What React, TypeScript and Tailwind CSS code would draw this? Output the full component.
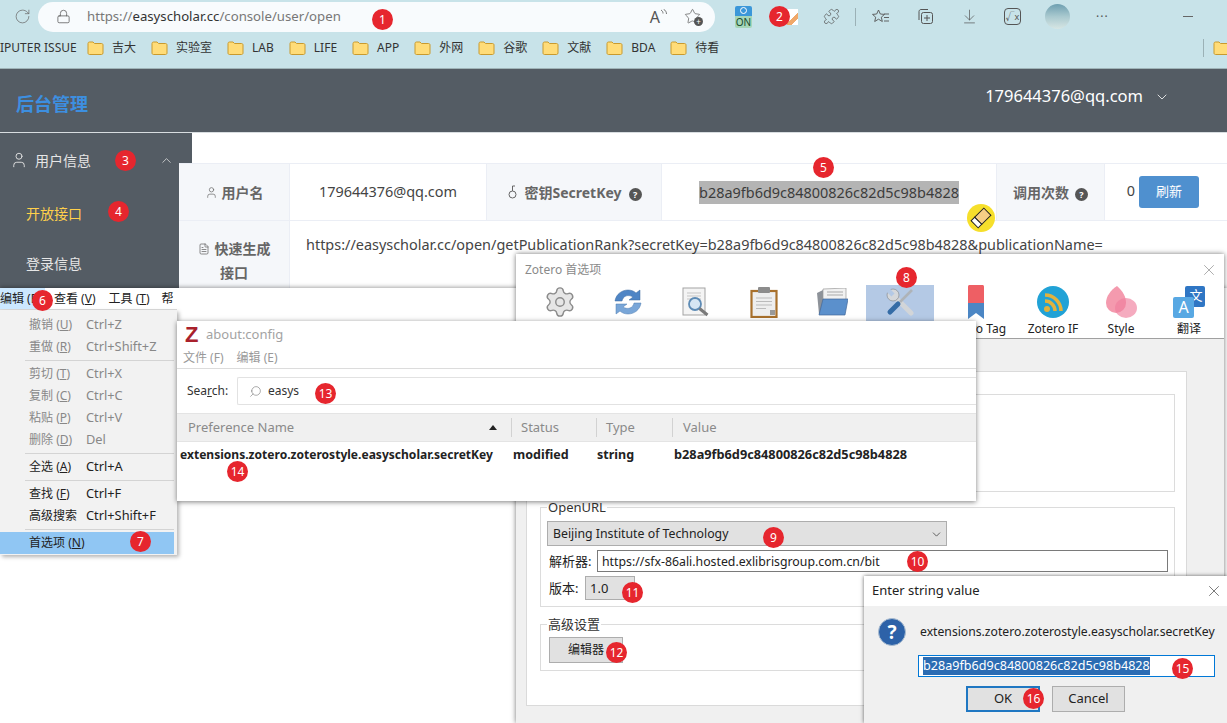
// App.tsx
import type { ReactNode } from 'react';
import { ArrowDownToLine, ChevronDown, ChevronUp, FileText, Lock, Puzzle, RotateCw, Search, Settings, Star, User, X } from 'lucide-react';

const SECRET_KEY = 'b28a9fb6d9c84800826c82d5c98b4828';
const OPEN_URL = `https://easyscholar.cc/open/getPublicationRank?secretKey=${SECRET_KEY}&publicationName=`;

const bookmarks = ['吉大', '实验室', 'LAB', 'LIFE', 'APP', '外网', '谷歌', '文献', 'BDA', '待看'];

function Marker({ n, className }: { n: number; className: string }) {
  return (
    <span className={`absolute z-40 flex h-[21px] w-[21px] items-center justify-center rounded-full bg-[#e6262e] text-[12px] leading-none text-white ${className}`}>
      {n}
    </span>
  );
}

function Folder() {
  return (
    <svg width="17" height="16" viewBox="0 0 17 16" className="shrink-0">
      <path d="M1 3.5C1 2.7 1.6 2 2.5 2H6l1.5 1.5h7c.9 0 1.5.6 1.500 1.500v8c0 .9-.6 1.500-1.500 1.500h-12C1.600 14.500 1 13.900 1 13z" fill="#ffdc78" stroke="#c99a2e" />
    </svg>
  );
}

function BrowserChrome() {
  return (
    <div className="h-[68px] shrink-0 bg-[#c8e3e9] text-[#444]">
      <div className="flex h-[33px] items-center">
        <div className="flex w-[38px] justify-center pl-[6px]">
          <RotateCw size={17} strokeWidth={1} className="text-[#666]" />
        </div>
        <div className="flex h-[30px] w-[677px] items-center rounded-full bg-[#f8fbfd]">
          <Lock size={15} strokeWidth={1.2} className="ml-[18px] text-[#555]" />
          <span className="ml-[16px] text-[13.2px] text-[#777]">
            https://<span className="text-[#333]">easyscholar.cc</span>/console/user/open
          </span>
          <span className="ml-auto mr-[14px] flex items-center gap-[17px] text-[#555]">
            <span className="flex items-start text-[16px] leading-none">
              A
              <svg width="7" height="9" viewBox="0 0 7 9" fill="none" stroke="currentColor" strokeWidth="0.800">
                <path d="M1 1c1.500 1 2 2 2 3.500M3.500 0c2 1.500 3 3 3 5" />
              </svg>
            </span>
            <span className="relative">
              <Star size={17} strokeWidth={1} />
              <span className="absolute -bottom-[1px] -right-[2px] flex h-[9px] w-[9px] items-center justify-center rounded-full bg-[#555] text-[8px] leading-none text-white">+</span>
            </span>
          </span>
        </div>
        <div className="ml-[20px] flex h-[22px] w-[17px] flex-col items-center overflow-hidden rounded-[2px]">
          <div className="flex h-[10px] w-full items-center justify-center bg-[#3b97d9]">
            <span className="h-[7px] w-[7px] rounded-full border border-white" />
          </div>
          <div className="flex h-[12px] w-full items-center justify-center bg-[#a5d6b8] text-[10px] leading-none text-[#174a2c]">ON</div>
        </div>
        <div className="ml-[35px] h-[16px] w-[11px] bg-[linear-gradient(135deg,#fff_55%,#f0a869_55%,#f0a869_75%,#fff_75%)]" />
        <Puzzle size={17} strokeWidth={1} className="ml-[25px] text-[#555]" />
        <span className="ml-[15px] h-[18px] w-px bg-[#9bb1b6]" />
        <div className="ml-[16px] flex items-center text-[#555]">
          <span className="flex w-[18px] justify-center">
            <svg width="18" height="16" viewBox="0 0 18 16" fill="none" stroke="currentColor" strokeWidth="0.900">
              <path d="M6.500 1l1.800 4 4.200.4-3.200 2.800 1 4.300-3.800-2.300-3.800 2.300 1-4.300L.500 5.400l4.200-.4z" />
              <path d="M12 5h5M12 8.500h5M12 12h5" />
            </svg>
          </span>
          <span className="ml-[26px] flex w-[18px] justify-center">
            <svg width="17" height="17" viewBox="0 0 17 17" fill="none" stroke="currentColor">
              <rect x="4.500" y="4.500" width="11" height="11" rx="2" />
              <path d="M2 12V3.500C2 2.500 2.800 1.500 4 1.500h7M10 7v6M7 10h6" />
            </svg>
          </span>
          <span className="ml-[26px] flex w-[18px] justify-center"><ArrowDownToLine size={17} strokeWidth={1} /></span>
          <span className="ml-[26px] flex h-[17px] w-[17px] items-center justify-center rounded-[4px] border border-[#555] text-[9px]">√x</span>
          <span className="ml-[24px] h-[25px] w-[25px] rounded-full bg-gradient-to-b from-[#6e9fb0] via-[#a9c9cf] to-[#d7e6e4]" />
          <span className="ml-[26px] text-[12px] tracking-[1px] leading-none">···</span>
          <span className="ml-[74px] h-px w-[10px] bg-[#666]" />
        </div>
      </div>
      <div className="flex h-[30px] items-center whitespace-nowrap text-[12px]">
        <div className="w-[87px] shrink-0 text-[#333]">IPUTER ISSUE</div>
        <div className="flex shrink-0 gap-[15px]">
          {bookmarks.map(b => (
            <span key={b} className="flex shrink-0 items-center gap-[8px] text-[#333]">
              <Folder />
              {b}
            </span>
          ))}
        </div>
        <span className="ml-[484px] h-[18px] w-px shrink-0 bg-[#9bb1b6]" />
        <span className="ml-[9px] shrink-0"><Folder /></span>
      </div>
    </div>
  );
}

function HelpDot() {
  return (
    <span className="inline-flex h-[13px] w-[13px] items-center justify-center rounded-full bg-[#555] text-[9px] font-bold leading-none text-white">?</span>
  );
}

function LabelCell({ children, className = '' }: { children: ReactNode; className?: string }) {
  return (
    <div className={`flex items-center justify-center gap-[4px] border-r border-b border-[#ebeef5] bg-[#f5f7fa] text-[14px] font-bold text-[#666] ${className}`}>
      {children}
    </div>
  );
}

function InfoTable() {
  return (
    <div className="relative z-10 -ml-[13px] mt-[30px] grid h-[125px] flex-1 grid-cols-[111px_197px_175px_335px_108px_122px] grid-rows-[57px_68px] border-t border-[#ebeef5] bg-white text-[14.45px] text-[#444]">
      <LabelCell>
        <User size={13} strokeWidth={1.3} />
        用户名
      </LabelCell>
      <div className="flex items-center justify-center border-r border-b border-[#ebeef5]">179644376@qq.com</div>
      <LabelCell className="pl-[2px]">
        <svg width="9" height="14" viewBox="0 0 9 14" fill="none" stroke="#666" className="mr-[3px]">
          <circle cx="4.500" cy="9.500" r="3.500" />
          <path d="M4.500 6V1h2.500" />
        </svg>
        密钥SecretKey
        <span className="ml-[3px]"><HelpDot /></span>
      </LabelCell>
      <div className="flex items-center justify-center border-r border-b border-[#ebeef5]">
        <span className="bg-[#b4b4b4] leading-[23px] text-[#3c3c3c]">{SECRET_KEY}</span>
      </div>
      <LabelCell>
        调用次数
        <span className="ml-[2px]"><HelpDot /></span>
      </LabelCell>
      <div className="flex items-center justify-end gap-[4px] border-b border-[#ebeef5] pr-[28px]">
        <span className="-mt-[3px]">0</span>
        <button className="h-[32px] w-[60px] rounded-[3px] bg-[#4f90cf] text-[13px] text-white">刷新</button>
      </div>
      <LabelCell className="pt-[12px]">
        <div className="w-[80px] text-center leading-[24px]">
          <FileText size={12} strokeWidth={1.5} className="mr-[5px] inline align-[-1px]" />
          快速生成
          <br />
          接口
        </div>
      </LabelCell>
      <div className="col-span-5 whitespace-nowrap pl-[16px] pt-[13px] leading-[22px]">{OPEN_URL}</div>
    </div>
  );
}

function Sidebar() {
  return (
    <aside className="w-[192px] shrink-0 bg-[#545c64] text-[14px] text-[#e6e6e6]">
      <div className="flex h-[54px] items-center pl-[10px]">
        <User size={18} strokeWidth={1.2} />
        <span className="ml-[7px]">用户信息</span>
        <ChevronUp size={15} strokeWidth={1.2} className="ml-[68px]" />
      </div>
      <div className="flex h-[52px] items-center pl-[26px] text-[#ffd04b]">开放接口</div>
      <div className="flex h-[48px] items-center pl-[26px]">登录信息</div>
    </aside>
  );
}

type MenuEntry = { label?: string; key?: string; shortcut?: string; disabled?: boolean; active?: boolean };

const menuEntries: MenuEntry[] = [
  { label: '撤销', key: 'U', shortcut: 'Ctrl+Z', disabled: true },
  { label: '重做', key: 'R', shortcut: 'Ctrl+Shift+Z', disabled: true },
  {},
  { label: '剪切', key: 'T', shortcut: 'Ctrl+X', disabled: true },
  { label: '复制', key: 'C', shortcut: 'Ctrl+C', disabled: true },
  { label: '粘贴', key: 'P', shortcut: 'Ctrl+V', disabled: true },
  { label: '删除', key: 'D', shortcut: 'Del', disabled: true },
  {},
  { label: '全选', key: 'A', shortcut: 'Ctrl+A' },
  {},
  { label: '查找', key: 'F', shortcut: 'Ctrl+F' },
  { label: '高级搜索', shortcut: 'Ctrl+Shift+F' },
  {},
  { label: '首选项', key: 'N', active: true },
];

function EditMenu() {
  return (
    <div className="absolute left-0 top-[288px] z-20 w-[177px] text-[12px] text-[#222]">
      <div className="flex h-[22px] items-center border-b border-[#dcdcdc] bg-white">
        <span className="flex h-full w-[45px] items-center bg-[#cce8ff]">编辑 (E)</span>
        <span className="ml-[9px]">查看 (<u>V</u>)</span>
        <span className="ml-[13px]">工具 (<u>T</u>)</span>
        <span className="ml-[12px]">帮</span>
      </div>
      <div className="h-[245px] bg-[#f2f2f2] pb-[1px] pr-[3px] pt-[4px] shadow-[2px_2px_4px_rgba(0,0,0,0.3)]">
        {menuEntries.map((m, i) =>
          m.label ? (
            <div key={i} className={`flex h-[22px] items-center pl-[29px] ${m.disabled ? 'text-[#888]' : ''} ${m.active ? 'bg-[#90c6f3]' : ''}`}>
              <span className="w-[57px] whitespace-nowrap">
                {m.label}
                {m.key && (
                  <>
                    {' ('}
                    <u>{m.key}</u>)
                  </>
                )}
              </span>
              <span className="text-[12.8px]">{m.shortcut}</span>
            </div>
          ) : (
            <div key={i} className="flex h-[5px] items-center pl-[25px]">
              <div className="h-px w-full bg-[#d4d4d4]" />
            </div>
          ),
        )}
      </div>
    </div>
  );
}

function SyncIcon() {
  return (
    <svg width="28" height="28" viewBox="0 0 28 28">
      <path d="M1 13C2 6 8 2 14 2c3 0 6 1 8 3l4-3v10H15l4-3c-5-3-10-1-11 4z" fill="#4f85c5" stroke="#3c689e" strokeWidth="0.500" />
      <path d="M27 15c-1 7-7 11-13 11-3 0-6-1-8-3l-4 3V16h11l-4 3c5 3 10 1 11-4z" fill="#79a6d8" stroke="#4f7cb0" strokeWidth="0.500" />
    </svg>
  );
}

function DocSearchIcon() {
  return (
    <svg width="28" height="30" viewBox="0 0 28 30">
      <rect x="1" y="1" width="22" height="27" fill="#f4f4f4" stroke="#a3a3a3" />
      <path d="M5 6h14M5 9h14M5 12h14" stroke="#c5c5c5" />
      <circle cx="13" cy="17" r="6" fill="#d6e6f3" stroke="#5d8bb5" strokeWidth="1.800" />
      <path d="M17.500 21.500l8 6.500" stroke="#7a7a7a" strokeWidth="3" />
    </svg>
  );
}

function ClipboardIcon() {
  return (
    <svg width="28" height="31" viewBox="0 0 28 31">
      <rect x="1.500" y="4" width="25" height="26" fill="#eee" stroke="#a8702c" strokeWidth="2.200" />
      <rect x="8" y="0" width="12" height="6" rx="1" fill="#8c8c8c" />
      <path d="M6 11h16M6 14.500h16M6 18h16M6 21.500h10" stroke="#bbb" />
      <rect x="20" y="23" width="5" height="5" fill="#999" />
    </svg>
  );
}

function FolderOpenIcon() {
  return (
    <svg width="32" height="28" viewBox="0 0 32 28">
      <path d="M1 5l6-3v24H3z" fill="#8d9299" />
      <path d="M7 1l23-1v14H7z" fill="#f1f1f1" stroke="#9a9a9a" strokeWidth="0.700" />
      <path d="M11 4h16M11 7h16" stroke="#a9a9a9" />
      <path d="M7 11h25l-3 16H3z" fill="#5b90cc" stroke="#43699a" strokeWidth="0.700" />
    </svg>
  );
}

function ToolsIcon() {
  return (
    <svg width="28" height="28" viewBox="0 0 28 28" fill="none">
      <path d="M7 7l18 18" stroke="#d2d5d8" strokeWidth="5" strokeLinecap="round" />
      <circle cx="7" cy="7" r="6" fill="#d5d8db" stroke="#7d8186" strokeWidth="0.600" />
      <path d="M1 1l6 6" stroke="#b4c9e5" strokeWidth="4.500" />
      <path d="M14 14L26 2" stroke="#aeb3b8" strokeWidth="2.600" />
      <path d="M4 24l8-8" stroke="#356ca6" strokeWidth="5" strokeLinecap="round" />
    </svg>
  );
}

function BookmarkIcon() {
  return (
    <svg width="16" height="34" viewBox="0 0 16 34">
      <path d="M0 1.500C0 .700.700 0 1.500 0h13c.800 0 1.500.700 1.500 1.500V18H0z" fill="#ee5f64" />
      <path d="M0 18h16v16l-8-6-8 6z" fill="#4b86c4" />
    </svg>
  );
}

function RssIcon() {
  return (
    <svg width="32" height="32" viewBox="0 0 32 32" fill="none">
      <circle cx="16" cy="16" r="16" fill="#21a2d6" />
      <circle cx="10" cy="23" r="3" fill="#e2b23d" />
      <path d="M8 15a10 10 0 0 1 10 10M8 9a16 16 0 0 1 16 16" stroke="#e2b23d" strokeWidth="3.500" />
    </svg>
  );
}

function PetalIcon() {
  return (
    <svg width="32" height="32" viewBox="0 0 32 32">
      <path d="M12 0c6 5 9 11 9 17a10 10 0 0 1-20 0C1 10 6 4 12 0z" fill="#f49aae" />
      <ellipse cx="21" cy="22" rx="11" ry="10" fill="#f07e9c" fillOpacity="0.650" />
    </svg>
  );
}

function TranslateIcon() {
  return (
    <svg width="32" height="32" viewBox="0 0 32 32">
      <rect x="12" y="0" width="20" height="21" rx="2" fill="#2f76c4" />
      <text x="23" y="14" fontSize="13" fill="#fff" textAnchor="middle">文</text>
      <rect x="0" y="11" width="21" height="21" rx="2" fill="#58a8e3" />
      <text x="10.500" y="27" fontSize="16" fill="#fff" textAnchor="middle">A</text>
    </svg>
  );
}

const prefTabs = [
  { label: '通用', width: 'w-[68px]', icon: <Settings size={34} strokeWidth={1} className="fill-[#e6e6e6] text-[#8c8c8c]" /> },
  { label: '同步', width: 'w-[68px]', icon: <SyncIcon /> },
  { label: '搜索', width: 'w-[68px]', icon: <DocSearchIcon /> },
  { label: '导出', width: 'w-[68px]', icon: <ClipboardIcon /> },
  { label: '引用', width: 'w-[68px]', icon: <FolderOpenIcon /> },
  { label: '高级', width: 'w-[68px]', icon: <ToolsIcon />, active: true },
  { label: 'Zotero Tag', width: 'w-[84px]', icon: <BookmarkIcon /> },
  { label: 'Zotero IF', width: 'w-[70px]', icon: <RssIcon /> },
  { label: 'Style', width: 'w-[66px]', icon: <PetalIcon /> },
  { label: '翻译', width: 'w-[70px]', icon: <TranslateIcon /> },
];

function GroupBox({ title, className, children }: { title?: string; className: string; children?: ReactNode }) {
  return (
    <div className={`relative border border-[#dcdcdc] ${className}`}>
      {title && <span className="absolute -top-[10px] left-[6px] bg-white px-[1px] text-[13px] leading-[18px] text-[#333]">{title}</span>}
      {children}
    </div>
  );
}

function ZoteroPrefs() {
  return (
    <div className="absolute left-[516px] top-[254px] z-20 flex h-[469px] w-[708px] flex-col bg-white shadow-[0_0_5px_rgba(0,0,0,0.55)]">
      <div className="flex h-[31px] shrink-0 items-center justify-between pl-[9px] pr-[6px] text-[12px] text-[#8a8a8a]">
        Zotero 首选项
        <X size={18} strokeWidth={0.8} className="text-[#777]" />
      </div>
      <div className="flex h-[54px] shrink-0 border-b border-[#a0a0a0] pl-[10px]">
        {prefTabs.map(t => (
          <div key={t.label} className={`flex shrink-0 flex-col items-center ${t.width} ${t.active ? 'bg-[#b4c9e5]' : ''}`}>
            <div className="flex h-[34px] items-center justify-center">{t.icon}</div>
            <span className="mt-[2px] whitespace-nowrap text-[12px] leading-[16px] text-[#222]">{t.label}</span>
          </div>
        ))}
      </div>
      <div className="flex-1 bg-[#f0f0f0] pl-[10px] pt-[32px]">
        <div className="h-[335px] w-[661px] border border-[#dadada] bg-white pl-[13px] pt-[22px] text-[13px] text-[#222]">
          <GroupBox className="h-[98px] w-[635px]" />
          <GroupBox title="OpenURL" className="mt-[15px] h-[100px] w-[635px] pl-[6px] pt-[13px]">
            <div className="flex h-[25px] w-[400px] items-center justify-between border border-[#adadad] bg-[#e1e1e1] pl-[5px] pr-[3px] pt-[2px] text-[12.3px]">
              Beijing Institute of Technology
              <ChevronDown size={13} strokeWidth={1.5} className="text-[#444]" />
            </div>
            <div className="mt-[4px] flex h-[22px] items-center pl-[2px]">
              <span className="w-[48px] pt-[2px]">解析器:</span>
              <div className="flex h-[22px] w-[571px] items-center border border-[#7a7a7a] pl-[4px] pt-[2px] text-[12.3px]">https://sfx-86ali.hosted.exlibrisgroup.com.cn/bit</div>
            </div>
            <div className="mt-[4px] flex h-[24px] items-center pl-[2px]">
              <span className="w-[36px] pt-[2px]">版本:</span>
              <div className="flex h-[24px] w-[50px] items-center border border-[#adadad] bg-[#e1e1e1] pl-[4px] pt-[2px]">1.0</div>
            </div>
          </GroupBox>
          <GroupBox title="高级设置" className="mt-[17px] h-[47px] w-[635px] pl-[8px] pt-[12px]">
            <button className="h-[26px] w-[74px] border border-[#adadad] bg-[#e1e1e1] text-[12px] text-[#222]">编辑器</button>
          </GroupBox>
        </div>
      </div>
    </div>
  );
}

function AboutConfig() {
  return (
    <div className="absolute left-[177px] top-[321px] z-30 h-[180px] w-[799px] bg-white shadow-[0_1px_5px_rgba(0,0,0,0.5)]">
      <div className="flex h-[27px] items-center pl-[8px]">
        <span className="w-[21px] text-[22px] font-bold leading-none text-[#a9212c] [font-family:'Liberation_Sans',sans-serif]">Z</span>
        <span className="text-[13px] text-[#a3a3a3]">about:config</span>
      </div>
      <div className="flex h-[21px] items-center gap-[13px] border-b border-[#dcdcdc] pl-[6px] text-[12px] text-[#999]">
        <span>文件 (F)</span>
        <span>编辑 (E)</span>
      </div>
      <div className="flex h-[44px] items-center pl-[10px]">
        <span className="w-[50px] text-[12px] text-[#333]">Sea<u>r</u>ch:</span>
        <div className="flex h-[28px] flex-1 items-center gap-[6px] rounded-l-[2px] border border-r-0 border-[#e2e2e2] pl-[11px] text-[12px] text-[#333]">
          <Search size={13} strokeWidth={1} className="-scale-x-100 text-[#666]" />
          easys
        </div>
      </div>
      <div className="grid h-[29px] grid-cols-[334px_85px_76px_1fr] items-center border-y border-[#e4e4e4] bg-[#f0f0f0] text-[13px] text-[#8a8a8a]">
        <div className="flex items-center justify-between pl-[11px] pr-[14px]">
          Preference Name
          <span className="h-0 w-0 border-x-[4px] border-b-[5px] border-x-transparent border-b-[#222]" />
        </div>
        <div className="border-l border-[#d2d2d2] pl-[9px]">Status</div>
        <div className="border-l border-[#d2d2d2] pl-[9px]">Type</div>
        <div className="border-l border-[#d2d2d2] pl-[10px]">Value</div>
      </div>
      <div className="grid h-[26px] grid-cols-[334px_85px_76px_1fr] items-center whitespace-nowrap text-[12.5px] font-bold text-[#222]">
        <div className="pl-[3px] text-[12.05px]">extensions.zotero.zoterostyle.easyscholar.secretKey</div>
        <div className="pl-[2px]">modified</div>
        <div className="pl-[1px]">string</div>
        <div className="pl-[2px] text-[12.75px]">{SECRET_KEY}</div>
      </div>
    </div>
  );
}

function StringDialog() {
  return (
    <div className="absolute left-[864px] top-[576px] z-30 flex h-[147px] w-[363px] flex-col bg-[#f0f0f0] text-[13px] text-[#222] shadow-[0_0_4px_rgba(0,0,0,0.6)]">
      <div className="flex h-[30px] shrink-0 items-center justify-between bg-white pl-[8px] pr-[4px]">
        Enter string value
        <X size={18} strokeWidth={0.8} />
      </div>
      <div className="mt-[12px] flex h-[28px] items-center pl-[14px]">
        <span className="flex h-[28px] w-[28px] shrink-0 items-center justify-center rounded-full border border-[#a9bcd0] bg-[#2d62a8] text-[19px] font-bold leading-none text-white">?</span>
        <span className="ml-[14px] whitespace-nowrap text-[12.2px]">extensions.zotero.zoterostyle.easyscholar.secretKey</span>
      </div>
      <div className="ml-[54px] mt-[9px] flex h-[22px] w-[297px] items-center border border-[#0078d7] bg-white pl-[4px]">
        <span className="bg-[#2b6cb3] text-[12.6px] leading-[18px] text-white">{SECRET_KEY}</span>
      </div>
      <div className="ml-[102px] mt-[9px] flex gap-[12px]">
        <button className="h-[26px] w-[74px] border-2 border-[#1f77c2] bg-[#e1e1e1]">OK</button>
        <button className="h-[26px] w-[73px] border border-[#adadad] bg-[#e1e1e1]">Cancel</button>
      </div>
    </div>
  );
}

function HighlighterBadge() {
  return (
    <span className="absolute left-[967px] top-[204px] z-40 flex h-[28px] w-[28px] items-center justify-center rounded-full bg-[#f6df2b]">
      <svg width="20" height="20" viewBox="0 0 20 20" className="rotate-45">
        <rect x="5" y="1" width="10" height="13" fill="#f6cf86" stroke="#222" />
        <rect x="5" y="14" width="10" height="5" fill="#fff" stroke="#222" />
      </svg>
    </span>
  );
}

function App() {
  return (
    <div className="relative flex h-[723px] w-[1227px] flex-col overflow-hidden bg-white [font-family:'Noto_Sans','Noto_Sans_CJK_SC',sans-serif]">
      <BrowserChrome />

      <header className="flex h-[64px] shrink-0 items-center justify-between border-t border-[#9fb4b8] bg-[#545c64] pl-[16px] pr-[57px] text-white">
        <span className="pt-[8px] text-[18px] font-bold text-[#3d8fe0]">后台管理</span>
        <span className="flex items-center gap-[11px] pb-[8px] text-[16.5px]">
          179644376@qq.com
          <ChevronDown size={16} strokeWidth={1.2} />
        </span>
      </header>

      <div className="flex h-[156px] shrink-0 border-t border-[#d8dde0]">
        <Sidebar />
        <InfoTable />
      </div>

      <div className="relative z-10 flex-1 bg-white shadow-[0_-1px_4px_rgba(0,0,0,0.35)]" />

      <EditMenu />
      <ZoteroPrefs />
      <AboutConfig />
      <StringDialog />
      <HighlighterBadge />

      <Marker n={1} className="left-[372px] top-[9px]" />
      <Marker n={2} className="left-[769px] top-[6px]" />
      <Marker n={3} className="left-[115px] top-[150px]" />
      <Marker n={4} className="left-[108px] top-[201px]" />
      <Marker n={5} className="left-[813px] top-[157px]" />
      <Marker n={6} className="left-[32px] top-[290px]" />
      <Marker n={7} className="left-[130px] top-[531px]" />
      <Marker n={8} className="left-[896px] top-[267px]" />
      <Marker n={9} className="left-[763px] top-[527px]" />
      <Marker n={10} className="left-[907px] top-[551px]" />
      <Marker n={11} className="left-[622px] top-[582px]" />
      <Marker n={12} className="left-[606px] top-[642px]" />
      <Marker n={13} className="left-[315px] top-[383px]" />
      <Marker n={14} className="left-[227px] top-[461px]" />
      <Marker n={15} className="left-[1172px] top-[658px]" />
      <Marker n={16} className="left-[1023px] top-[688px]" />
    </div>
  );
}

export default App;
